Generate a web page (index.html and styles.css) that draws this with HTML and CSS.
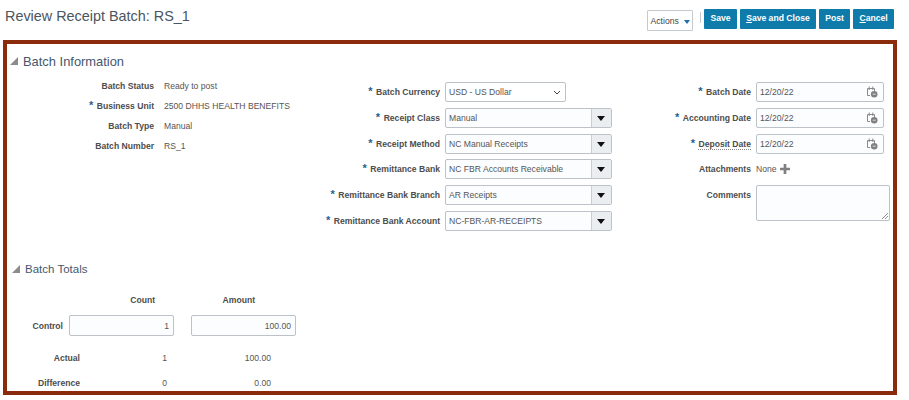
FILE: index.html
```html
<!DOCTYPE html>
<html lang="en">
<head>
  <meta charset="UTF-8">
  <title>Review Receipt Batch: RS_1</title>
  <link rel="stylesheet" href="styles.css">
</head>
<body>
  <header class="page-head">
    <h1>Review Receipt Batch: RS_1</h1>
    <div class="toolbar">
      <div class="actions">Actions <span class="actions-arrow"></span></div>
      <span class="toolbar-sep"></span>
      <div class="button">Save</div>
      <div class="button"><u>S</u>ave and Close</div>
      <div class="button">Post</div>
      <div class="button"><u>C</u>ancel</div>
    </div>
  </header>

  <main class="frame">
    <h2 class="section-head"><span class="twisty"></span>Batch Information</h2>
    <div class="form">
      <div class="col col-info">
        <div class="label">Batch Status</div><div class="value">Ready to post</div>
        <div class="label"><span class="req">*</span>Business Unit</div><div class="value">2500 DHHS HEALTH BENEFITS</div>
        <div class="label">Batch Type</div><div class="value">Manual</div>
        <div class="label">Batch Number</div><div class="value">RS_1</div>
      </div>

      <div class="col col-bank">
        <div class="label"><span class="req">*</span>Batch Currency</div>
        <div class="field field-select">USD - US Dollar
          <svg class="chevron" viewBox="0 0 8 5"><path d="M1 1l3 3 3-3" fill="none" stroke="#444" stroke-width="1"/></svg>
        </div>
        <div class="label"><span class="req">*</span>Receipt Class</div>
        <div class="field field-combo"><span class="combo-text">Manual</span><span class="combo-btn"></span></div>
        <div class="label"><span class="req">*</span>Receipt Method</div>
        <div class="field field-combo"><span class="combo-text">NC Manual Receipts</span><span class="combo-btn"></span></div>
        <div class="label"><span class="req">*</span>Remittance Bank</div>
        <div class="field field-combo"><span class="combo-text">NC FBR Accounts Receivable</span><span class="combo-btn"></span></div>
        <div class="label"><span class="req">*</span>Remittance Bank Branch</div>
        <div class="field field-combo"><span class="combo-text">AR Receipts</span><span class="combo-btn"></span></div>
        <div class="label"><span class="req">*</span>Remittance Bank Account</div>
        <div class="field field-combo"><span class="combo-text">NC-FBR-AR-RECEIPTS</span><span class="combo-btn"></span></div>
      </div>

      <div class="col col-dates">
        <div class="label"><span class="req">*</span>Batch Date</div>
        <div class="field field-date">12/20/22
          <svg class="cal" viewBox="0 0 12 12"><path d="M1.5 2.5h7v2.500M1.5 2.5v7h2.500M3.200 .5v3.500M6.800 .5v3.500" fill="none" stroke="#8a8a8a" stroke-width="1"/><circle cx="8.200" cy="8.200" r="3.300" fill="#808080"/><path d="M6.700 8.200h3" stroke="#d8d8d8" stroke-width="1"/></svg>
        </div>
        <div class="label"><span class="req">*</span>Accounting Date</div>
        <div class="field field-date">12/20/22
          <svg class="cal" viewBox="0 0 12 12"><path d="M1.5 2.5h7v2.500M1.5 2.5v7h2.500M3.200 .5v3.500M6.800 .5v3.500" fill="none" stroke="#8a8a8a" stroke-width="1"/><circle cx="8.200" cy="8.200" r="3.300" fill="#808080"/><path d="M6.700 8.200h3" stroke="#d8d8d8" stroke-width="1"/></svg>
        </div>
        <div class="label"><span class="req">*</span><span class="dotted">Deposit Date</span></div>
        <div class="field field-date">12/20/22
          <svg class="cal" viewBox="0 0 12 12"><path d="M1.5 2.5h7v2.500M1.5 2.5v7h2.500M3.200 .5v3.500M6.800 .5v3.500" fill="none" stroke="#8a8a8a" stroke-width="1"/><circle cx="8.200" cy="8.200" r="3.300" fill="#808080"/><path d="M6.700 8.200h3" stroke="#d8d8d8" stroke-width="1"/></svg>
        </div>
        <div class="label">Attachments</div>
        <div class="attach">None
          <svg class="plus" viewBox="0 0 11 11"><path d="M4 0h3v4h4v3H7v4H4V7H0V4h4z" fill="#808080"/></svg>
        </div>
        <div class="label label-top">Comments</div>
        <div class="comments">
          <svg class="grip" viewBox="0 0 6 6"><path d="M0 6l6-6M3 6l3-3" stroke="#777" stroke-width=".8"/></svg>
        </div>
      </div>
    </div>

    <h2 class="section-head totals-head"><span class="twisty"></span>Batch Totals</h2>
    <div class="control-grid">
      <div></div><div class="col-title title-count">Count</div><div class="col-title title-amount">Amount</div>
      <div class="label control-label">Control</div><div class="field field-num">1</div><div class="field field-num">100.00</div>
    </div>
    <div class="result-grid">
      <div class="label">Actual</div><div class="value num">1</div><div class="value num">100.00</div>
      <div class="label">Difference</div><div class="value num">0</div><div class="value num">0.00</div>
    </div>
  </main>
</body>
</html>
```

FILE: styles.css
```css
html, body {
  height: 400px;
}

body {
  margin: 0;
  background-color: #fff;
  font-family: "Liberation Sans", Arial, sans-serif;
  font-size: 8.600px;
  color: #555;
  overflow: hidden;
}

.page-head {
  display: flex;
  justify-content: space-between;
  height: 40px;
  padding: 0 15px 0 5px;
  box-sizing: border-box;
}

h1 {
  margin: 6px 0 0;
  font-size: 14.400px;
  font-weight: normal;
  line-height: 20px;
  color: #4a5560;
}

.toolbar {
  display: flex;
  align-items: flex-start;
  padding-top: 9px;
}

.actions {
  display: flex;
  align-items: center;
  justify-content: center;
  gap: 5px;
  width: 46px;
  height: 21px;
  margin-top: 1px;
  box-sizing: border-box;
  border: 1px solid #c4c9ce;
  border-radius: 1px;
  color: #444;
}

.actions-arrow {
  width: 0;
  height: 0;
  margin-top: 3px;
  border-left: 3.500px solid transparent;
  border-right: 3.500px solid transparent;
  border-top: 4px solid #1b6fae;
}

.toolbar-sep {
  width: 1px;
  height: 11px;
  margin: 3px 3px 0 7px;
  background-color: #c4c8cc;
}

.button {
  height: 20px;
  margin-right: 3px;
  padding: 0 6.300px;
  background-color: #0f7bab;
  border-radius: 1px;
  color: #fff;
  font-weight: bold;
  line-height: 19px;
}

.button:last-child {
  margin-right: 0;
}

.frame {
  width: 894px;
  height: 355px;
  margin-left: 3px;
  box-sizing: border-box;
  border: 4px solid #8c2a0c;
  overflow: hidden;
}

.section-head {
  display: flex;
  align-items: center;
  height: 20px;
  margin: 7px 0 0;
  padding-left: 3px;
  font-size: 12.900px;
  font-weight: normal;
  color: #44586e;
}

.twisty {
  width: 0;
  height: 0;
  margin-right: 5px;
  border-bottom: 8px solid #8c8c8c;
  border-left: 8px solid transparent;
}

.form {
  display: flex;
  height: 183px;
  margin-top: 5px;
}

.col {
  display: grid;
  align-content: start;
  align-items: center;
}

.col-info {
  grid-template-columns: 147px 1fr;
  grid-auto-rows: 20px;
  column-gap: 10px;
  width: 300px;
}

.col-bank {
  grid-template-columns: 133px 167px;
  grid-auto-rows: 20px;
  column-gap: 5px;
  row-gap: 5.800px;
  width: 305px;
  padding-top: 6px;
}

.col-dates {
  grid-template-columns: 139px 134px;
  grid-auto-rows: minmax(20px, auto);
  column-gap: 5px;
  row-gap: 5.800px;
  padding-top: 6px;
}

.label {
  font-weight: bold;
  color: #4d4d4d;
  text-align: right;
  white-space: nowrap;
}

.label-top {
  align-self: start;
  padding-top: 5px;
}

.req {
  margin-right: 3.500px;
  color: #1f5f94;
  font-size: 11px;
  line-height: 9px;
}

.dotted {
  border-bottom: 1px dotted #888;
}

.value {
  white-space: nowrap;
}

.field {
  display: flex;
  align-items: center;
  height: 20px;
  box-sizing: border-box;
  background-color: #fbfdfe;
  border: 1px solid #bcc2c8;
  border-radius: 2px;
  white-space: nowrap;
}

.field-select {
  justify-content: space-between;
  width: 121px;
  padding: 0 4px 0 3px;
  background-color: #fff;
}

.chevron {
  width: 8px;
  height: 5px;
}

.combo-text {
  flex: 1;
  padding-left: 3px;
}

.combo-btn {
  position: relative;
  width: 19px;
  height: 100%;
  background-color: #ebeef0;
  border-left: 1px solid #c9ced2;
}

.combo-btn::after {
  content: "";
  position: absolute;
  top: 7px;
  left: 5px;
  border-left: 4px solid transparent;
  border-right: 4px solid transparent;
  border-top: 5px solid #111;
}

.field-date {
  justify-content: space-between;
  width: 128px;
  padding: 0 5px 0 3px;
}

.cal {
  width: 12px;
  height: 12px;
}

.attach {
  display: flex;
  align-items: center;
  gap: 3px;
}

.plus {
  width: 10px;
  height: 10px;
}

.comments {
  position: relative;
  height: 36px;
  box-sizing: border-box;
  background-color: #fbfdfe;
  border: 1px solid #bcc2c8;
  border-radius: 2px;
}

.grip {
  position: absolute;
  right: 1px;
  bottom: 1px;
  width: 6px;
  height: 6px;
}

.totals-head {
  margin-top: 0;
  padding-left: 5px;
  font-size: 11.500px;
}

.control-grid {
  display: grid;
  grid-template-columns: 62px 122px 105px;
  grid-template-rows: 11px 21px;
  row-gap: 10px;
  align-items: center;
  margin-top: 15px;
}

.control-label {
  padding-right: 6px;
}

.control-grid .field {
  width: 105px;
  height: 21px;
}

.col-title {
  font-weight: bold;
  color: #4d4d4d;
  text-align: right;
}

.title-count {
  padding-right: 36px;
}

.title-amount {
  padding-right: 41px;
}

.field-num {
  justify-content: flex-end;
  padding-right: 4px;
}

.result-grid {
  display: grid;
  grid-template-columns: 73px 87px 104px;
  grid-auto-rows: 25px;
  align-items: center;
  margin-top: 9px;
}

.num {
  text-align: right;
}
```
